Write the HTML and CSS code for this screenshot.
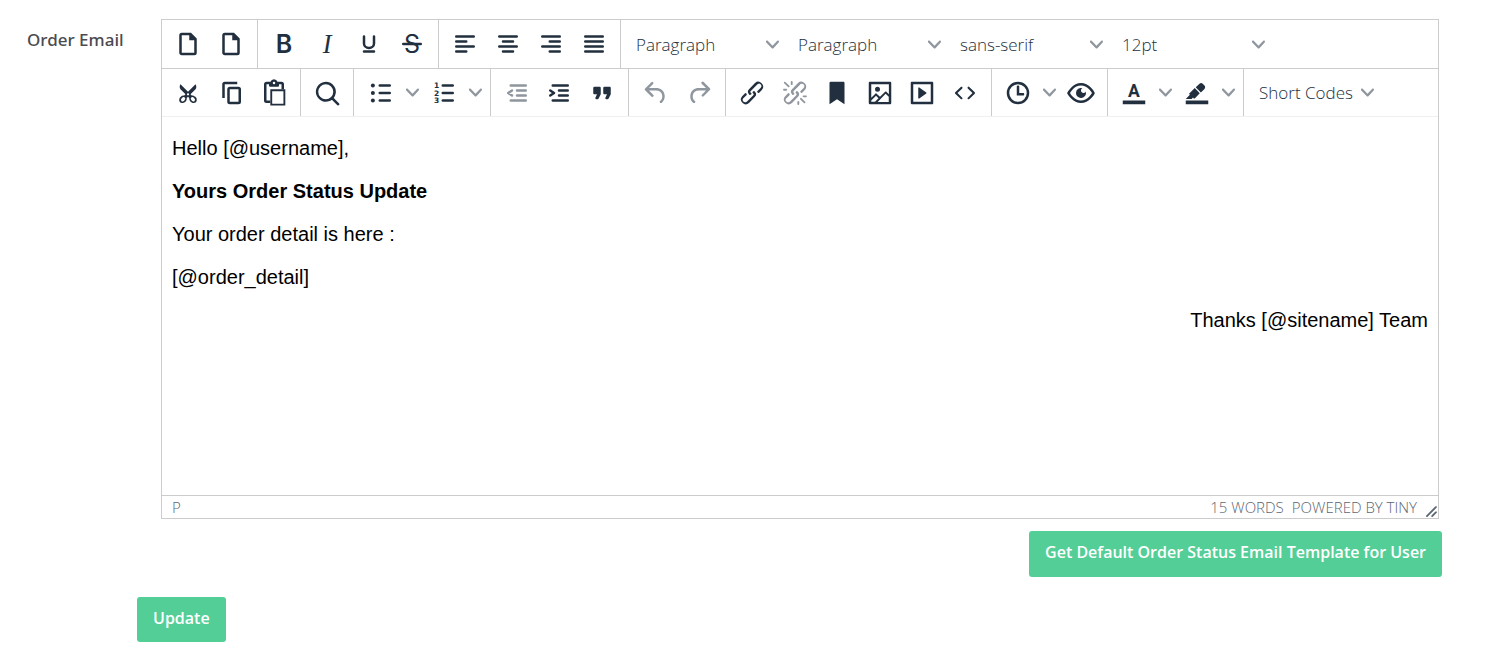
FILE: index.html
```html
<!DOCTYPE html>
<html lang="en">
<head>
<meta charset="utf-8">
<meta name="viewport" content="width=device-width, initial-scale=1">
<title>Order Email</title>
<link rel="stylesheet" href="styles.css">
</head>
<body>
<svg class="sprite" aria-hidden="true">
  <symbol id="chevron" viewBox="0 0 10 10"><path d="M8.7 2.2c.3-.3.8-.3 1 0 .4.4.4.9 0 1.2L5.7 7.8c-.3.3-.9.3-1.2 0L.2 3.4a.8.8 0 010-1.2c.3-.3.8-.3 1.1 0L5 6l3.7-3.8z"/></symbol>
  <symbol id="document" viewBox="0 0 24 24"><path fill-rule="evenodd" d="M14.4 3H7a2 2 0 00-2 2v14c0 1.1.9 2 2 2h10a2 2 0 002-2V7.6L14.4 3zM17 19H7V5h6v4h4v10z"/></symbol>
</svg>
<form class="page">
  <div class="field">
    <label class="field-label" id="email-label" for="email-body">Order Email</label>
    <div class="editor">
      <div class="toolbar toolbar-main">
        <div class="group pair">
          <button type="button" class="tool" aria-label="New document"><svg class="icon"><use href="#document"/></svg></button>
          <button type="button" class="tool" aria-label="New page"><svg class="icon"><use href="#document"/></svg></button>
        </div>
        <div class="group formats">
          <button type="button" class="tool" aria-label="Bold"><svg class="icon" viewBox="0 0 24 24"><text class="glyph-bold" x="12" y="19" text-anchor="middle">B</text></svg></button>
          <button type="button" class="tool" aria-label="Italic"><svg class="icon" viewBox="0 0 24 24"><text class="glyph-italic" x="12" y="19" text-anchor="middle">I</text></svg></button>
          <button type="button" class="tool" aria-label="Underline"><svg class="icon" viewBox="0 0 24 24"><path d="M8 6v5.500a4 3.600 0 008 0V6M8 18h8" fill="none" stroke="currentColor" stroke-width="2" stroke-linecap="round"/></svg></button>
          <button type="button" class="tool" aria-label="Strikethrough"><svg class="icon" viewBox="0 0 24 24"><text class="glyph-strike" x="12" y="19" text-anchor="middle">S</text><path d="M5 11h14a1 1 0 010 2H5a1 1 0 010-2z"/></svg></button>
        </div>
        <div class="group aligns">
          <button type="button" class="tool" aria-label="Align left"><svg class="icon lines" viewBox="0 0 24 24"><path d="M5 6h14M5 10h8M5 14h14M5 18h8"/></svg></button>
          <button type="button" class="tool" aria-label="Align center"><svg class="icon lines" viewBox="0 0 24 24"><path d="M5 6h14M8 10h8M5 14h14M8 18h8"/></svg></button>
          <button type="button" class="tool" aria-label="Align right"><svg class="icon lines" viewBox="0 0 24 24"><path d="M5 6h14M11 10h8M5 14h14M11 18h8"/></svg></button>
          <button type="button" class="tool" aria-label="Justify"><svg class="icon lines" viewBox="0 0 24 24"><path d="M5 6h14M5 10h14M5 14h14M5 18h14"/></svg></button>
        </div>
        <div class="group last">
          <div class="picker"><select aria-label="Style"><option>Paragraph</option></select><svg class="chevron"><use href="#chevron"/></svg></div>
          <div class="picker"><select aria-label="Block format"><option>Paragraph</option></select><svg class="chevron"><use href="#chevron"/></svg></div>
          <div class="picker"><select aria-label="Font"><option>sans-serif</option></select><svg class="chevron"><use href="#chevron"/></svg></div>
          <div class="picker"><select aria-label="Font size"><option>12pt</option></select><svg class="chevron"><use href="#chevron"/></svg></div>
        </div>
      </div>
      <div class="toolbar toolbar-extra">
        <div class="group clipboard">
          <button type="button" class="tool" aria-label="Cut"><svg class="icon" viewBox="0 0 24 24"><path d="M18 15c.6.700 1 1.400 1 2.300 0 .8-.2 1.500-.7 2l-.8.5-1 .2c-.4 0-.8 0-1.200-.3a3.900 3.900 0 01-2.100-2.200c-.2-.5-.3-1-.2-1.500l-1-1-1 1c0 .5 0 1-.2 1.500-.1.5-.4 1-.9 1.400-.3.4-.7.600-1.200.8l-1.200.3c-.4 0-.7 0-1-.2-.3 0-.6-.3-.8-.5-.5-.5-.8-1.200-.7-2 0-.9.4-1.600 1-2.200A3.700 3.700 0 018.600 14H9l1-1-4-4-.5-1a3.300 3.300 0 010-2c0-.4.3-.7.5-1l6 6 6-6 .5 1a3.300 3.300 0 010 2c0 .4-.3.7-.5 1l-4 4 1 1h.5c.4 0 .8 0 1.200.3.5.2.9.4 1.200.7z"/><g fill="#fff"><ellipse cx="8.100" cy="17" rx="1.900" ry="1.400" transform="rotate(-45 8.100 17)"/><ellipse cx="15.900" cy="17" rx="1.900" ry="1.400" transform="rotate(45 15.900 17)"/><circle cx="12" cy="13" r=".9"/></g></svg></button>
          <button type="button" class="tool" aria-label="Copy"><svg class="icon" viewBox="0 0 24 24"><path fill-rule="evenodd" d="M16 3H6a2 2 0 00-2 2v11h2V5h10V3zm1 4a2 2 0 012 2v10a2 2 0 01-2 2h-7a2 2 0 01-2-2V9c0-1.200.9-2 2-2h7zm0 12V9h-7v10h7z" transform="translate(1)"/></svg></button>
          <button type="button" class="tool" aria-label="Paste"><svg class="icon" viewBox="0 0 24 24"><path fill-rule="evenodd" d="M18 9V5h-2v1c0 .6-.4 1-1 1H9a1 1 0 01-1-1V5H6v13h3v2H6a2 2 0 01-2-2V5c0-1.100.9-2 2-2h3.200A3 3 0 0112 1a3 3 0 012.800 2H18a2 2 0 012 2v4zM12 3a1 1 0 100 2 1 1 0 000-2z"/><path d="M9.800 9.800h10.500v11.500H9.800z" fill="none" stroke="currentColor" stroke-width="1.500"/></svg></button>
        </div>
        <div class="group one">
          <button type="button" class="tool" aria-label="Find and replace"><svg class="icon" viewBox="0 0 24 24"><path fill-rule="evenodd" d="M16 17.300a8 8 0 111.400-1.400l4.300 4.400a1 1 0 01-1.400 1.400l-4.400-4.300zm-5-.3a6 6 0 100-12 6 6 0 000 12z"/></svg></button>
        </div>
        <div class="group lists">
          <button type="button" class="tool" aria-label="Bullet list"><svg class="icon lines" viewBox="0 0 24 24"><path d="M11 6h8M11 12h8M11 18h8"/><g fill="currentColor" stroke="none"><circle cx="5.500" cy="6" r="1.600"/><circle cx="5.500" cy="12" r="1.600"/><circle cx="5.500" cy="18" r="1.600"/></g></svg></button>
          <button type="button" class="menu" aria-label="Bullet list styles"><svg class="chevron"><use href="#chevron"/></svg></button>
          <button type="button" class="tool" aria-label="Numbered list"><svg class="icon lines" viewBox="0 0 24 24"><path d="M11 6h8M11 12h8M11 18h8"/><g class="glyph-number"><text x="4" y="8">1</text><text x="4" y="14">2</text><text x="4" y="20">3</text></g></svg></button>
          <button type="button" class="menu" aria-label="Numbered list styles"><svg class="chevron"><use href="#chevron"/></svg></button>
        </div>
        <div class="group indents">
          <button type="button" class="tool" disabled aria-label="Decrease indent"><svg class="icon lines" viewBox="0 0 24 24"><path d="M7 6h12M12 10h7M12 14h7M7 18h12M8 10l-3 2 3 2"/></svg></button>
          <button type="button" class="tool" aria-label="Increase indent"><svg class="icon lines" viewBox="0 0 24 24"><path d="M7 6h12M12 10h7M12 14h7M7 18h12M5 10l3 2-3 2"/></svg></button>
          <button type="button" class="tool" aria-label="Blockquote"><svg class="icon" viewBox="0 0 24 24"><path d="M7.500 17h.9c.4 0 .7-.2.9-.6L11 13V8c0-.6-.4-1-1-1H6a1 1 0 00-1 1v4c0 .6.4 1 1 1h2l-1.300 2.700a1 1 0 00.8 1.300zm8 0h.9c.4 0 .7-.2.9-.6L19 13V8c0-.6-.4-1-1-1h-4a1 1 0 00-1 1v4c0 .6.4 1 1 1h2l-1.300 2.700a1 1 0 00.8 1.300z"/></svg></button>
        </div>
        <div class="group history">
          <button type="button" class="tool" disabled aria-label="Undo"><svg class="icon" viewBox="0 0 24 24"><path d="M6.400 8H12c3.700 0 6.200 2 6.800 5.100.6 2.700-.4 5.600-2.300 6.800a1 1 0 01-1-1.800c1.100-.6 1.800-2.700 1.400-4.600-.5-2.100-2.100-3.500-4.900-3.500H6.400l3.300 3.300a1 1 0 11-1.400 1.400l-5-5a1 1 0 010-1.400l5-5a1 1 0 011.400 1.400L6.400 8z"/></svg></button>
          <button type="button" class="tool" disabled aria-label="Redo"><svg class="icon" viewBox="0 0 24 24"><path d="M17.600 10H12c-2.800 0-4.400 1.400-4.900 3.500-.4 2 .3 4 1.400 4.600a1 1 0 11-1 1.800c-2-1.200-2.900-4.100-2.300-6.800.6-3 3-5.100 6.800-5.100h5.600l-3.300-3.300a1 1 0 111.400-1.400l5 5a1 1 0 010 1.400l-5 5a1 1 0 01-1.400-1.400l3.300-3.300z"/></svg></button>
        </div>
        <div class="group six">
          <button type="button" class="tool" aria-label="Insert link"><svg class="icon" viewBox="0 0 24 24"><path d="M6.200 12.300a1 1 0 011.400 1.400l-2.100 2a2 2 0 102.700 2.800l4.800-4.800a1 1 0 000-1.400 1 1 0 111.400-1.300 2.900 2.900 0 010 4L9.600 20a3.900 3.900 0 01-5.500-5.500l2-2zm11.600-.6a1 1 0 01-1.400-1.400l2-2a2 2 0 10-2.600-2.800L11 10.300a1 1 0 000 1.400A1 1 0 119.600 13a2.900 2.900 0 010-4L14.400 4a3.900 3.900 0 015.500 5.500l-2 2z"/></svg></button>
          <button type="button" class="tool" disabled aria-label="Remove link"><svg class="icon" viewBox="0 0 24 24"><path d="M6.200 12.300a1 1 0 011.400 1.400l-2 2a2 2 0 102.600 2.800l4.800-4.800a1 1 0 000-1.400 1 1 0 111.400-1.300 2.900 2.900 0 010 4L9.600 20a3.900 3.900 0 01-5.500-5.500l2-2zm11.600-.6a1 1 0 01-1.400-1.400l2.100-2a2 2 0 10-2.700-2.800L11 10.300a1 1 0 000 1.400A1 1 0 119.600 13a2.900 2.900 0 010-4L14.400 4a3.900 3.900 0 015.500 5.500l-2 2zM7.600 6.300a.8.8 0 01-1 1.100L3.300 4.200a.7.700 0 111-1l3.200 3.100zM5.100 8.600a.8.8 0 010 1.500H3a.8.8 0 010-1.500H5zm5-3.500a.8.8 0 01-1.500 0V3a.8.8 0 011.500 0V5zm6 11.800a.8.8 0 011-1l3.200 3.200a.8.8 0 01-1 1L16 17zm-2.200 2a.8.8 0 011.500 0V21a.8.8 0 01-1.500 0V19zm5-3.500a.7.700 0 110-1.500H21a.8.8 0 010 1.500H19z"/></svg></button>
          <button type="button" class="tool" aria-label="Anchor"><svg class="icon" viewBox="0 0 24 24"><path d="M6 4v17l6-4 6 4V4c0-.6-.4-1-1-1H7a1 1 0 00-1 1z"/></svg></button>
          <button type="button" class="tool" aria-label="Insert image"><svg class="icon" viewBox="0 0 24 24"><path fill-rule="evenodd" d="M5 15.700l3.300-3.200c.3-.3.7-.3 1 0L12 15l4.100-4c.3-.4.8-.4 1 0l2 1.900V5H5v10.700zM5 18V19h3l2.800-2.900-2-2L5 17.900zm14-3l-2.500-2.400-6.400 6.500H19v-4zM4 3h16c.6 0 1 .4 1 1v16c0 .6-.4 1-1 1H4a1 1 0 01-1-1V4c0-.6.4-1 1-1zm6 8a2 2 0 100-4 2 2 0 000 4z"/></svg></button>
          <button type="button" class="tool" aria-label="Insert media"><svg class="icon" viewBox="0 0 24 24"><path fill-rule="evenodd" d="M4 3h16c.6 0 1 .4 1 1v16c0 .6-.4 1-1 1H4a1 1 0 01-1-1V4c0-.6.4-1 1-1zm1 2v14h14V5H5zm4.800 2.600l5.600 4a.5.5 0 010 .8l-5.600 4A.5.5 0 019 16V8a.5.5 0 01.8-.4z"/></svg></button>
          <button type="button" class="tool" aria-label="Source code"><svg class="icon" viewBox="0 0 24 24"><path d="M9.800 15.700c.3.300.3.800 0 1-.3.400-.9.400-1.200 0l-4.400-4.100a.8.8 0 010-1.200l4.400-4.200c.3-.3.9-.3 1.200 0 .3.300.3.800 0 1.100L6 12l3.800 3.700zM14.200 15.700c-.3.300-.3.800 0 1 .4.400.9.400 1.200 0l4.400-4.100c.3-.3.3-.9 0-1.200l-4.400-4.200a.8.8 0 00-1.200 0c-.3.300-.3.800 0 1.100L18 12l-3.800 3.700z"/></svg></button>
        </div>
        <div class="group time">
          <button type="button" class="tool" aria-label="Insert date and time"><svg class="icon" viewBox="0 0 24 24"><path fill-rule="evenodd" d="M12 19a7 7 0 100-14 7 7 0 000 14zm0 2a9 9 0 110-18 9 9 0 010 18z"/><path d="M16 12h-3V7c0-.6-.4-1-1-1s-1 .4-1 1v7h5c.6 0 1-.4 1-1s-.4-1-1-1z"/></svg></button>
          <button type="button" class="menu" aria-label="Date formats"><svg class="chevron"><use href="#chevron"/></svg></button>
          <button type="button" class="tool" aria-label="Preview"><svg class="icon" viewBox="0 0 24 24"><path fill-rule="evenodd" d="M3.500 12.500c.5.8 1.100 1.600 1.800 2.300 2 2 4.200 3.200 6.700 3.200s4.700-1.200 6.700-3.200a16.200 16.200 0 002.100-2.800 15.700 15.700 0 00-2.100-2.800c-2-2-4.200-3.200-6.700-3.200a9.300 9.300 0 00-6.700 3.200A16.200 16.200 0 003.200 12c0 .2.200.3.300.5zm-2.400-1l.7-1.200L4 7.800C6.200 5.400 8.900 4 12 4c3 0 5.800 1.400 8.100 3.800a18.200 18.200 0 012.800 3.700v1l-.7 1.200a18 18 0 01-2.100 2.500c-2.300 2.400-5 3.800-8.100 3.800-3 0-5.800-1.400-8.100-3.800a18.200 18.200 0 01-2.800-3.700 1 1 0 010-1zm12-3.300a2 2 0 102.700 2.600 4 4 0 11-2.600-2.600z"/></svg></button>
        </div>
        <div class="group colors">
          <button type="button" class="tool" aria-label="Text color"><svg class="icon" viewBox="0 0 24 24"><path d="M3 18h18v3H3z"/><text class="glyph-color" x="12" y="15" text-anchor="middle">A</text></svg></button>
          <button type="button" class="menu" aria-label="Text colors"><svg class="chevron"><use href="#chevron"/></svg></button>
          <button type="button" class="tool" aria-label="Background color"><svg class="icon" viewBox="0 0 24 24"><path d="M3 18h18v3H3zM7.700 16.700H3l3.300-3.300-.7-.8L10.200 8l4 4.100-4 4.200c-.2.200-.6.200-.8 0l-.6-.7-1.100 1.100zm5-7.500L11 7.400l3-2.900a2 2 0 012.600 0L18 6c.7.700.7 2 0 2.700l-2.900 2.900-1.800-1.800-.5-.6z"/></svg></button>
          <button type="button" class="menu" aria-label="Background colors"><svg class="chevron"><use href="#chevron"/></svg></button>
        </div>
        <div class="group last">
          <button type="button" class="codes">Short Codes<svg class="chevron"><use href="#chevron"/></svg></button>
        </div>
      </div>
      <div class="content" id="email-body" contenteditable="true" role="textbox" aria-multiline="true" aria-labelledby="email-label" spellcheck="false">
        <p>Hello [@username],</p>
        <p><strong>Yours Order Status Update</strong></p>
        <p>Your order detail is here :</p>
        <p>[@order_detail]</p>
        <p class="signature">Thanks [@sitename] Team</p>
      </div>
      <div class="statusbar">
        <span class="path">P</span>
        <span>15 words</span>
        <a href="#tiny">Powered by Tiny</a>
        <svg class="resize" viewBox="0 0 10 10" aria-hidden="true"><path d="M8.100 1.100A.5.5 0 119 2l-7 7A.5.5 0 111 8l7-7zM8.100 5.100A.5.5 0 119 6l-3 3A.5.5 0 115 8l3-3z"/></svg>
      </div>
    </div>
  </div>
  <div class="template-row"><button type="button" class="action template">Get Default Order Status Email Template for User</button></div>
  <div class="submit-row"><button type="submit" class="action">Update</button></div>
</form>
</body>
</html>
```

FILE: styles.css
```css
* { box-sizing: border-box; }

body {
  margin: 0;
  background: #fff;
  font-family: "Noto Sans", "Open Sans", sans-serif;
}

button, select { font: inherit; }

.sprite { display: none; }

.page { padding: 19px 44px 20px 27px; }

.field {
  display: grid;
  grid-template-columns: 134px minmax(0, 1fr);
  padding-right: 3px;
}

.field-label {
  padding-top: 9px;
  color: #4b4b50;
  font-size: 17px;
  font-weight: 500;
  line-height: 24px;
}

.editor {
  border: 1px solid #ccc;
  color: #222f3e;
  font-family: "Open Sans", sans-serif;
  font-size: 17px;
  font-weight: 300;
}

.toolbar { display: flex; }
.toolbar-main {
  height: 49px;
  border-bottom: 1px solid #ccc;
}
.toolbar-extra {
  height: 48px;
  border-bottom: 1px solid #f0f0f0;
}

.group {
  display: flex;
  flex: none;
  padding: 0 5px;
  border-right: 1px solid #ccc;
}
.one { width: 53px; }
.pair { width: 96px; }
.history { width: 97px; }
.clipboard { width: 139px; }
.indents { width: 138px; }
.formats { width: 181px; }
.aligns { width: 182px; }
.six { width: 266px; }
.lists { width: 137px; }
.time { width: 116px; }
.colors { width: 136px; }
.last { border-right: 0; }

.tool, .menu, .codes {
  display: flex;
  align-items: center;
  justify-content: center;
  padding: 0;
  border: 0;
  background: none;
  color: inherit;
}
.tool { flex: 1; }
.menu { flex: 0 0 20px; }
.tool:disabled { opacity: .5; }

.icon {
  width: 30px;
  height: 30px;
  flex: none;
  fill: currentColor;
}
.lines {
  fill: none;
  stroke: currentColor;
  stroke-width: 2;
  stroke-linecap: round;
  stroke-linejoin: round;
}
.chevron {
  width: 13px;
  height: 13px;
  fill: #222f3e;
  opacity: .5;
}

.glyph-bold { font: 600 20px Inter, sans-serif; }
.glyph-italic { font: italic 400 21px "Liberation Serif", serif; }
.glyph-strike { font: 400 20px Inter, sans-serif; }
.glyph-color { font: 700 14px Roboto, sans-serif; }
.glyph-number {
  fill: currentColor;
  stroke: none;
  font: 700 6px "DejaVu Sans", sans-serif;
}

.picker {
  display: grid;
  width: 162px;
  align-items: center;
}
.picker select, .picker .chevron { grid-area: 1 / 1; }
.picker select {
  height: 48px;
  padding: 0 30px 0 10px;
  border: 0;
  appearance: none;
  background: none;
  color: inherit;
}
.picker .chevron {
  justify-self: end;
  margin-right: 9px;
  pointer-events: none;
}

.codes {
  gap: 8px;
  padding: 0 10px;
}

.content {
  min-height: 378px;
  padding: 20px 10px;
  color: #000;
  font: 20px/23px "Liberation Sans", Arial, sans-serif;
}
.content p { margin: 0 0 20px; }
.content .signature { text-align: right; }

.statusbar {
  display: flex;
  align-items: center;
  gap: 8px;
  height: 23px;
  padding: 0 0 0 10px;
  border-top: 1px solid #ccc;
  color: #5d6673;
  font-size: 15px;
  text-transform: uppercase;
}
.statusbar a { color: inherit; text-decoration: none; }
.path { margin-right: auto; }
.resize {
  width: 13px;
  height: 13px;
  align-self: flex-end;
  fill: currentColor;
}

.template-row {
  display: flex;
  justify-content: flex-end;
  padding-top: 12px;
}
.submit-row { padding: 20px 0 0 110px; }

.action {
  height: 45px;
  padding: 0 16px 4px;
  border: 0;
  border-radius: 3px;
  background: #54ce97;
  color: #fff;
  font-family: "Open Sans", sans-serif;
  font-size: 16px;
  font-weight: 600;
}
.template { height: 46px; }
```
